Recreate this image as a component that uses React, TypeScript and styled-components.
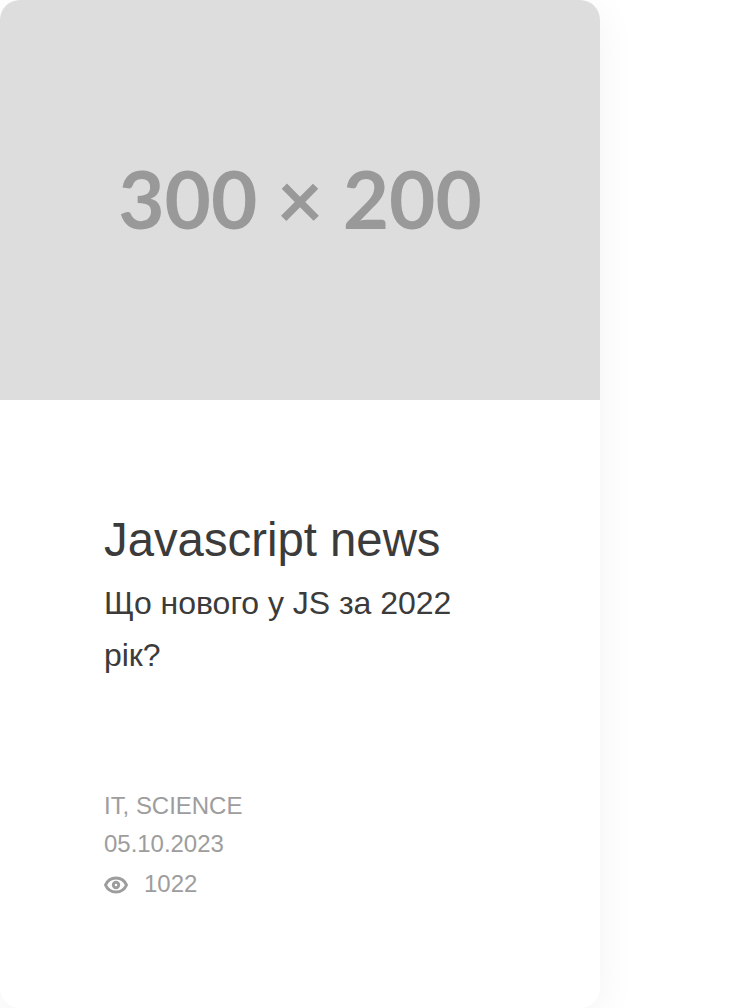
import React from "react";
import styled, { createGlobalStyle } from "styled-components";

const GlobalStyle = createGlobalStyle`
  *, *::before, *::after { box-sizing: border-box; }
  body {
    margin: 0;
    background: #fff;
    font-family: "Liberation Sans", Arial, sans-serif;
    -webkit-font-smoothing: antialiased;
  }
  h2, p { margin: 0; font-weight: 400; }
`;

const Page = styled.main`
  height: 1008px;
  overflow: hidden;
`;

const Card = styled.article`
  width: 600px;
  height: 1008px;
  border-radius: 20px;
  overflow: hidden;
  background: #fff;
  box-shadow: 0 8px 40px rgba(0, 0, 0, 0.05);
`;

const Cover = styled.div`
  display: flex;
  align-items: center;
  justify-content: center;
  height: 400px;
  padding: 0 0 4px;
  background: #ddd;
  color: #999;
  font: 700 80px/1 Lato, sans-serif;
`;

const Body = styled.div`
  padding: 103px 104px 0;
`;

const Title = styled.h2`
  margin-bottom: 1px;
  color: #3b3b3b;
  font-size: 47.3px;
  line-height: 73px;
`;

const Summary = styled.p`
  height: 210px;
  color: #3b3b3b;
  font-size: 32px;
  line-height: 52px;
  letter-spacing: -0.03px;
`;

const Meta = styled.div<{ $height: number }>`
  display: flex;
  align-items: center;
  gap: 16px;
  height: ${(p) => p.$height}px;
  color: #9d9d9d;
  font-size: 24px;
  letter-spacing: -0.03px;
`;

const Eye = styled.svg`
  position: relative;
  top: 1px;
`;

const EyeIcon = () => (
  <Eye width="24" height="24" viewBox="0 0 24 24" fill="none" stroke="#9d9d9d" strokeWidth="3">
    <path d="M1.500 12C3.500 7.400 7.300 5 12 5S20.500 7.400 22.500 12C20.500 16.600 16.700 19 12 19S3.500 16.600 1.500 12Z" />
    <circle cx="12" cy="12" r="2.700" />
  </Eye>
);

export default function App() {
  return (
    <>
      <GlobalStyle />
      <Page>
        <Card>
          <Cover>300 × 200</Cover>
          <Body>
            <Title>Javascript news</Title>
            <Summary>Що нового у JS за 2022 рік?</Summary>
            <Meta $height={38}>IT, SCIENCE</Meta>
            <Meta $height={38}>05.10.2023</Meta>
            <Meta $height={42}>
              <EyeIcon />
              1022
            </Meta>
          </Body>
        </Card>
      </Page>
    </>
  );
}
